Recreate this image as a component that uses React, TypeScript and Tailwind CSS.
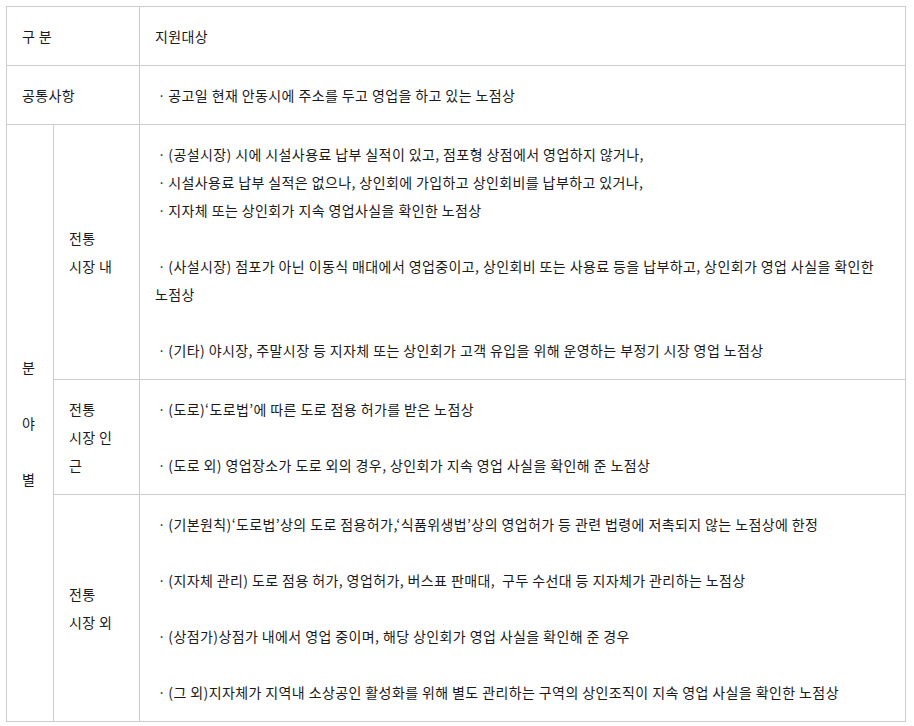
const font = { fontFamily: '"Noto Sans CJK KR", "Noto Sans", sans-serif' };

type Row = {
  sub: string[];
  lines: string[];
};

const rows: Row[] = [
  {
    sub: ["전통", "시장 내"],
    lines: [
      "ㆍ(공설시장) 시에 시설사용료 납부 실적이 있고, 점포형 상점에서 영업하지 않거나,",
      "ㆍ시설사용료 납부 실적은 없으나, 상인회에 가입하고 상인회비를 납부하고 있거나,",
      "ㆍ지자체 또는 상인회가 지속 영업사실을 확인한 노점상",
      "",
      "ㆍ(사설시장) 점포가 아닌 이동식 매대에서 영업중이고, 상인회비 또는 사용료 등을 납부하고, 상인회가 영업 사실을 확인한 노점상",
      "",
      "ㆍ(기타) 야시장, 주말시장 등 지자체 또는 상인회가 고객 유입을 위해 운영하는 부정기 시장 영업 노점상",
    ],
  },
  {
    sub: ["전통", "시장 인", "근"],
    lines: [
      "ㆍ(도로)‘도로법’에 따른 도로 점용 허가를 받은 노점상",
      "",
      "ㆍ(도로 외) 영업장소가 도로 외의 경우, 상인회가 지속 영업 사실을 확인해 준 노점상",
    ],
  },
  {
    sub: ["전통", "시장 외"],
    lines: [
      "ㆍ(기본원칙)‘도로법’상의 도로 점용허가,‘식품위생법’상의 영업허가 등 관련 법령에 저촉되지 않는 노점상에 한정",
      "",
      "ㆍ(지자체 관리) 도로 점용 허가, 영업허가, 버스표 판매대,\u00a0 구두 수선대 등 지자체가 관리하는 노점상",
      "",
      "ㆍ(상점가)상점가 내에서 영업 중이며, 해당 상인회가 영업 사실을 확인해 준 경우",
      "",
      "ㆍ(그 외)지자체가 지역내 소상공인 활성화를 위해 별도 관리하는 구역의 상인조직이 지속 영업 사실을 확인한 노점상",
    ],
  },
];

const cell = "border-r border-b border-[#cccccc] px-[15px] py-[15px]";

function Lines({ items }: { items: string[] }) {
  return (
    <>
      {items.map((t, i) =>
        t ? (
          <p key={i}>{t}</p>
        ) : (
          <p key={i} className="h-[28px]" />
        ),
      )}
    </>
  );
}

export default function App() {
  return (
    <div className="min-h-screen bg-white pl-[6px] pt-[6px]" style={font}>
      <div className="grid w-[900px] grid-cols-[47px_86px_766px] border-l border-t border-[#cccccc] text-[14px] leading-[28px] tracking-[0.4px] text-[#1a1a1a] break-keep">
        <div className={`${cell} col-span-2`}>구 분</div>
        <div className={cell}>지원대상</div>

        <div className={`${cell} col-span-2`}>공통사항</div>
        <div className={cell}>ㆍ공고일 현재 안동시에 주소를 두고 영업을 하고 있는 노점상</div>

        <div className={`${cell} row-span-3 flex flex-col justify-center`}>
          <p>분</p>
          <p className="h-[28px]" />
          <p>야</p>
          <p className="h-[28px]" />
          <p>별</p>
        </div>

        {rows.map((r, i) => (
          <div key={i} className="contents">
            <div className={`${cell} flex flex-col justify-center whitespace-nowrap`}>
              {r.sub.map((s, j) => (
                <p key={j}>{s}</p>
              ))}
            </div>
            <div className={cell}>
              <Lines items={r.lines} />
            </div>
          </div>
        ))}
      </div>
    </div>
  );
}
